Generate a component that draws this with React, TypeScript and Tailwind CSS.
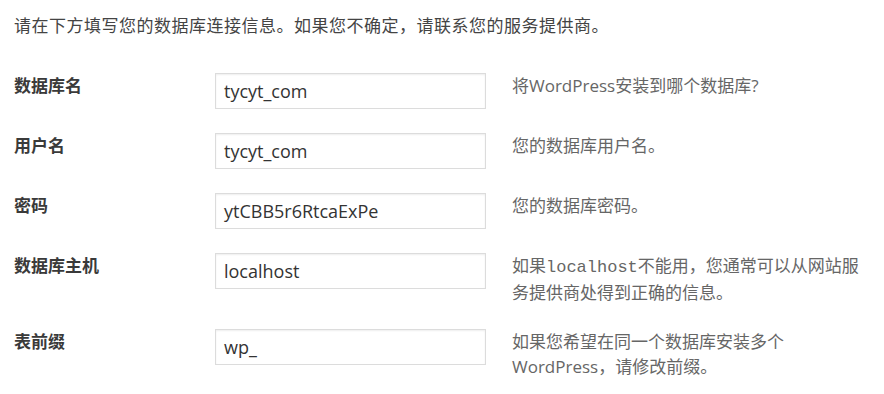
const fields = [
  { label: '数据库名', value: 'tycyt_com', desc: <>将WordPress安装到哪个数据库?</> },
  { label: '用户名', value: 'tycyt_com', desc: <>您的数据库用户名。</> },
  { label: '密码', value: 'ytCBB5r6RtcaExPe', desc: <>您的数据库密码。</> },
  {
    label: '数据库主机',
    value: 'localhost',
    desc: (
      <>
        如果<code className="font-['Liberation_Mono','DejaVu_Sans_Mono',monospace] text-[17px]">localhost</code>不能用，您通常可以从网站服
        <br />
        务提供商处得到正确的信息。
      </>
    ),
  },
  {
    label: '表前缀',
    value: 'wp_',
    desc: (
      <>
        如果您希望在同一个数据库安装多个
        <br />
        WordPress，请修改前缀。
      </>
    ),
  },
];

export default function App() {
  return (
    <div className="w-[884px] h-[394px] bg-white pl-[14px] pt-[14px] font-['Open_Sans','Noto_Sans_CJK_SC',sans-serif] text-[17px] overflow-hidden">
      {/* Intro */}
      <p className="leading-[24px] text-[#444] tracking-[0.5px]">
        请在下方填写您的数据库连接信息。如果您不确定，请联系您的服务提供商。
      </p>

      {/* Form rows */}
      <div className="mt-[35px] flex flex-col">
        {fields.map((f) => (
          <div key={f.label} className="flex items-start pb-[24px]">
            <div className="w-[201px] shrink-0 pt-[1px] leading-[24px] font-bold text-[#3a3a3a]">
              {f.label}
            </div>
            <div className="w-[271px] h-[36px] shrink-0 border border-[#dcdcdc] shadow-[inset_0_1px_2px_rgba(0,0,0,0.07)] flex items-center px-[8px] text-[#333] text-[18px]">
              {f.value}
            </div>
            <div className="ml-[26px] w-[370px] leading-[25px] text-[#666]">{f.desc}</div>
          </div>
        ))}
      </div>
    </div>
  );
}
